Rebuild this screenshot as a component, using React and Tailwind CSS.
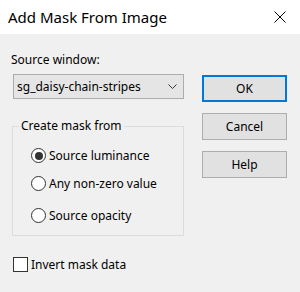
import React from 'react';

const font = { fontFamily: '"Noto Sans", "Liberation Sans", sans-serif' };

const Radio = ({ checked, label, className = '' }) => (
  <div className={`flex items-center ${className}`}>
    <span className="w-[15px] h-[15px] rounded-full border border-[#333333] bg-white flex items-center justify-center shrink-0">
      {checked && <span className="w-[8px] h-[8px] rounded-full bg-[#333333]" />}
    </span>
    <span className="ml-[3px] text-[12px] text-black leading-none">{label}</span>
  </div>
);

const Button = ({ children, primary }) => (
  <button
    className={`w-[85px] h-[27px] bg-[#e1e1e1] text-[12px] text-black ${
      primary ? 'border-2 border-[#0078d7]' : 'border border-[#adadad]'
    }`}
  >
    {children}
  </button>
);

export default function App() {
  return (
    <div className="w-[300px] h-[292px] bg-[#f0f0f0] flex flex-col" style={font}>
      <div className="h-[34px] bg-white flex items-center justify-between pl-[8px] pr-[14px]">
        <span className="text-[15px] text-black">Add Mask From Image</span>
        <svg width="12" height="12" viewBox="0 0 12 12" className="text-black">
          <path d="M0.5 0.5 L11.5 11.5 M11.5 0.5 L0.5 11.5" stroke="currentColor" strokeWidth="1" />
        </svg>
      </div>

      <div className="flex pl-[12px] pt-[20px]">
        <div className="w-[172px] flex flex-col">
          <span className="text-[12px] text-black leading-none -ml-[1px]">Source window:</span>
          <div className="mt-[8px] ml-[1px] h-[25px] bg-[#e5e5e5] border border-[#adadad] flex items-center justify-between pl-[3px] pr-[6px]">
            <span className="text-[12px] text-black">sg_daisy-chain-stripes</span>
            <svg width="9" height="5" viewBox="0 0 9 5">
              <path d="M0.5 0.5 L4.5 4.5 L8.5 0.5" stroke="#333" fill="none" strokeWidth="1" />
            </svg>
          </div>

          <fieldset className="mt-[21px] h-[116px] border border-[#dcdcdc] rounded-none px-0 pt-[16px] m-0">
            <legend className="text-[12px] text-black leading-none px-[2px] ml-[6px]">Create mask from</legend>
            <div className="pl-[18px] flex flex-col">
              <Radio checked label="Source luminance" />
              <Radio label="Any non-zero value" className="mt-[13px]" />
              <Radio label="Source opacity" className="mt-[17px]" />
            </div>
          </fieldset>
        </div>

        <div className="ml-[18px] mt-[21px] flex flex-col gap-[11px]">
          <Button primary>OK</Button>
          <Button>Cancel</Button>
          <Button>Help</Button>
        </div>
      </div>

      <div className="flex items-center pl-[13px] mt-[21px]">
        <span className="w-[15px] h-[15px] border border-[#333333] bg-white" />
        <span className="ml-[3px] text-[12px] text-black leading-none">Invert mask data</span>
      </div>
    </div>
  );
}
